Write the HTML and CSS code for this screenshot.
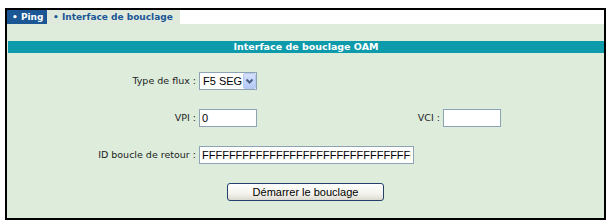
FILE: index.html
```html
<!DOCTYPE html>
<html lang="fr">
<head>
<meta charset="utf-8">
<title>Interface de bouclage</title>
<link rel="stylesheet" href="styles.css">
</head>
<body>
<div class="frame">
  <div class="tabs">
    <span class="tab tab-active">• Ping</span>
    <span class="tab tab-current">• Interface de bouclage</span>
  </div>
  <div class="panel">
    <div class="title">Interface de bouclage OAM</div>
    <div class="rows">
      <div class="row">
        <label class="lbl">Type de flux :</label>
        <select class="sel"><option>F5 SEG</option></select>
      </div>
      <div class="row">
        <label class="lbl">VPI :</label>
        <input class="txt short" type="text" value="0">
        <label class="lbl2">VCI :</label>
        <input class="txt short" type="text" value="">
      </div>
      <div class="row">
        <label class="lbl">ID boucle de retour :</label>
        <input class="txt long" type="text" value="FFFFFFFFFFFFFFFFFFFFFFFFFFFFFFFF">
      </div>
      <div class="row row-center">
        <button class="btn" type="button">Démarrer le bouclage</button>
      </div>
    </div>
  </div>
</div>
</body>
</html>
```
FILE: styles.css
```css
html, body {
  margin: 0;
  padding: 0;
  background: #ffffff;
  font-family: "DejaVu Sans", Verdana, sans-serif;
}

.frame {
  margin: 8px 0 0 5px;
  width: 597px;
  height: 208px;
  border: 2px solid #000000;
  display: flex;
  flex-direction: column;
}

.tabs {
  height: 14px;
  display: flex;
  background: #ffffff;
}

.tab {
  box-sizing: border-box;
  height: 14px;
  font-weight: bold;
  font-size: 9px;
  line-height: 14px;
  white-space: nowrap;
  padding-left: 5px;
}

.tab-active {
  width: 40px;
  background: #1b5795;
  color: #ffffff;
}

.tab-current {
  width: 133px;
  padding-left: 6px;
  background: #dfeadd;
  color: #1b5795;
}

.panel {
  flex: 1;
  background: #ddecdb;
  padding: 17px 0 0 1px;
}

.title {
  height: 12px;
  background: #0d9aab;
  color: #ffffff;
  font-weight: bold;
  font-size: 9.5px;
  line-height: 12px;
  text-align: center;
}

.rows {
  padding-top: 9px;
  display: flex;
  flex-direction: column;
}

.row {
  height: 37px;
  display: flex;
  align-items: center;
}

.row-center {
  justify-content: center;
  padding-right: 1px;
}

.lbl {
  width: 188px;
  margin-right: 3px;
  text-align: right;
  font-size: 9.5px;
  color: #222222;
  white-space: nowrap;
}

.lbl2 {
  width: 183px;
  margin-right: 3px;
  text-align: right;
  font-size: 9.5px;
  color: #222222;
  white-space: nowrap;
}

.txt {
  box-sizing: border-box;
  height: 18px;
  margin: 0;
  border: 1px solid #8fa3b6;
  background: #ffffff;
  padding: 0 2px;
  font-family: "Liberation Sans", Arial, sans-serif;
  font-size: 11px;
  color: #000000;
  outline: none;
}

.short {
  width: 58px;
}

.long {
  width: 215px;
}

.sel {
  box-sizing: border-box;
  width: 58px;
  height: 18px;
  margin: 0;
  border: 1px solid #8fa3b6;
  padding: 0 0 0 3px;
  font-family: "Liberation Sans", Arial, sans-serif;
  font-size: 11px;
  color: #000000;
  -webkit-appearance: none;
  appearance: none;
  background-color: #ffffff;
  background-image: url("data:image/svg+xml;utf8,<svg xmlns='http://www.w3.org/2000/svg' width='13' height='16' viewBox='0 0 13 16'><defs><linearGradient id='g' x1='0' y1='0' x2='0' y2='1'><stop offset='0' stop-color='%23d6e2fc'/><stop offset='1' stop-color='%23b3c8f6'/></linearGradient></defs><rect x='0.5' y='0.5' width='12' height='15' rx='1.5' fill='url(%23g)' stroke='%23b5c8ee'/><path d='M3.5 6.5 L6.5 9.5 L9.5 6.5' fill='none' stroke='%234d6185' stroke-width='2'/></svg>");
  background-repeat: no-repeat;
  background-position: right 0 top 0;
  outline: none;
}

.btn {
  box-sizing: border-box;
  width: 157px;
  height: 18px;
  margin: 0;
  padding: 0;
  border: 1px solid #25416b;
  border-radius: 3px;
  background: linear-gradient(#ffffff 0%, #f4f3ee 60%, #dcdad0 100%);
  font-family: "Liberation Sans", Arial, sans-serif;
  font-size: 11px;
  color: #000000;
}
```
